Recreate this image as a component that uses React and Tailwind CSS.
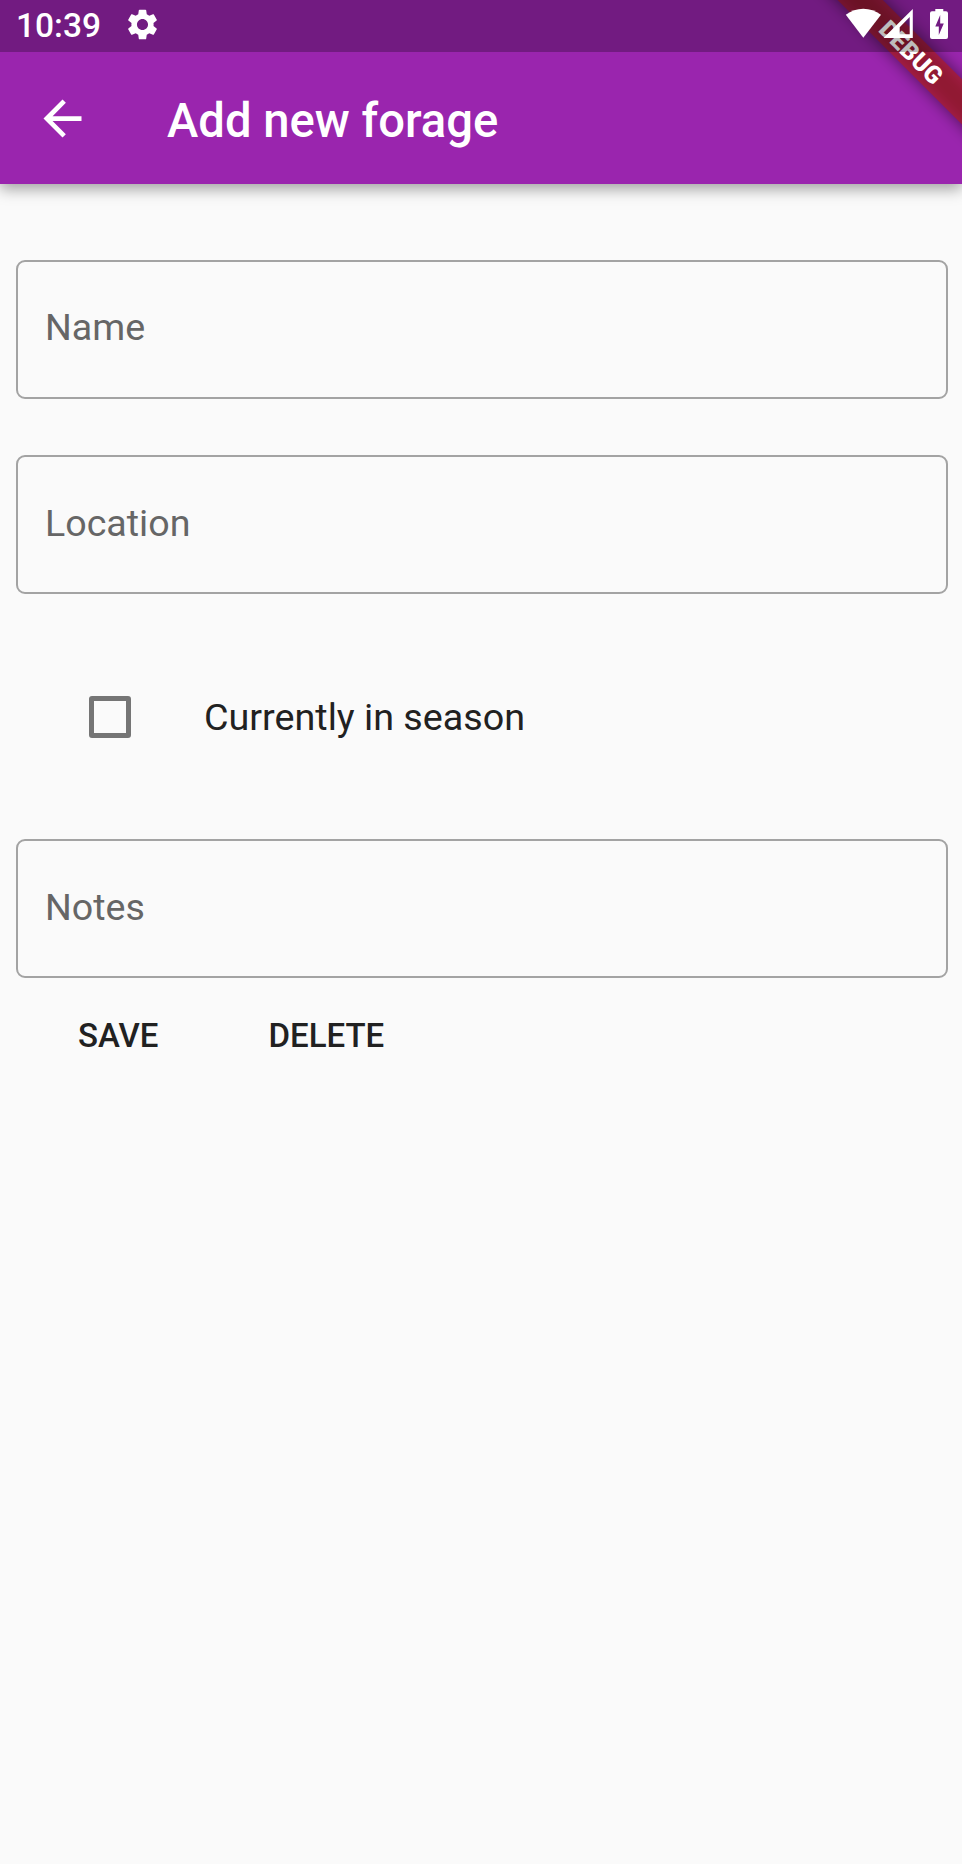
function Gear() {
  return (
    <svg viewBox="0 0 24 24" className="ml-[22.500px] h-[37px] w-[37px] fill-white">
      <path d="M19.14 12.94c.04-.3.06-.61.06-.94 0-.32-.02-.64-.07-.94l2.03-1.58c.18-.14.23-.41.12-.61l-1.92-3.32c-.12-.22-.37-.29-.59-.22l-2.39.96c-.5-.38-1.03-.7-1.62-.94l-.36-2.54c-.04-.24-.24-.41-.48-.41h-3.84c-.24 0-.43.17-.47.41l-.36 2.54c-.59.24-1.13.57-1.62.94l-2.39-.96c-.22-.08-.47 0-.59.22L2.74 8.87c-.12.21-.08.47.12.61l2.03 1.58c-.05.3-.09.63-.09.94s.02.64.07.94l-2.03 1.58c-.18.14-.23.41-.12.61l1.92 3.32c.12.22.37.29.59.22l2.39-.96c.5.38 1.03.7 1.62.94l.36 2.54c.05.24.24.41.48.41h3.84c.24 0 .44-.17.47-.41l.36-2.54c.59-.24 1.13-.56 1.62-.94l2.39.96c.22.08.47 0 .59-.22l1.92-3.32c.12-.22.07-.47-.12-.61l-2.01-1.58zM12 15.6c-1.98 0-3.6-1.62-3.6-3.6s1.62-3.6 3.6-3.6 3.6 1.62 3.6 3.6-1.62 3.6-3.6 3.6z" />
    </svg>
  );
}

function StatusIcons() {
  return (
    <svg viewBox="0 0 160 52" className="ml-auto h-[52px] w-[160px] fill-white">
      <path d="M43.8 14.800C49 11 55 8.800 61.300 8.800s12.500 2.200 17.700 6L61.300 37.800z" />
      <path fillRule="evenodd" d="M110.800 9V38H81.500zM107.700 17L97.700 27.200V34.300H107.700z" />
      <path fillRule="evenodd" d="M133.300 9h8v2.200h2.700a2 2 0 0 1 2 2v23.900a2 2 0 0 1-2 2h-14a2 2 0 0 1-2-2V13.200a2 2 0 0 1 2-2h3.300zM138.200 15l-4.900 11.500h3.500v8.500l5-11.500h-3.600z" />
    </svg>
  );
}

function DebugBanner() {
  return (
    <svg viewBox="0 0 162 162" className="absolute top-0 right-0 h-[162px] w-[162px]">
      <defs>
        <filter id="soft" x="-20%" y="-100%" width="140%" height="300%">
          <feGaussianBlur stdDeviation="8" />
        </filter>
      </defs>
      <g transform="translate(162 0) rotate(45)">
        <rect x="-110" y="56" width="220" height="32" fill="#000" fillOpacity="0.5" filter="url(#soft)" />
        <rect x="-110" y="56" width="220" height="32" fill="#b71c1c" fillOpacity="0.63" />
        <text x="1" y="81.500" textAnchor="middle" className="fill-white font-['Roboto'] text-[24.500px] font-black">DEBUG</text>
      </g>
    </svg>
  );
}

function Field({ label, className }) {
  return (
    <div className={`h-[139px] rounded-[9px] border-2 border-[#a3a3a3] pl-[27px] text-[37.600px] leading-[44px] text-[#666666] ${className}`}>
      {label}
    </div>
  );
}

export default function App() {
  return (
    <div className="h-[1864px] w-[962px] overflow-hidden bg-[#fafafa] font-['Roboto',sans-serif] text-[#212121]">
      <header className="relative h-[184px] overflow-visible bg-[#9a25ae] text-white shadow-[0_5px_14px_rgba(0,0,0,0.36)]">
        <DebugBanner />
        <div className="relative flex h-[52px] items-start bg-black/26">
          <span className="mt-[6px] ml-[16px] w-[85px] text-[33.500px] leading-[40px] font-medium">10:39</span>
          <div className="flex pt-[6px]"><Gear /></div>
          <StatusIcons />
        </div>
        <div className="flex h-[132px] items-center">
          <svg viewBox="0 0 24 24" className="ml-[34px] h-[57px] w-[57px] fill-white">
            <path d="M20 11H7.830l5.590-5.590L12 4l-8 8 8 8 1.410-1.410L7.830 13H20v-2z" />
          </svg>
          <h1 className="mt-[5px] ml-[76px] text-[47.200px] leading-[56px] font-medium">Add new forage</h1>
        </div>
      </header>
      <main className="pt-[76px] pr-[14px] pl-[16px]">
        <Field label="Name" className="pt-[43px]" />
        <Field label="Location" className="mt-[56px] pt-[44px]" />
        <label className="mt-[101px] flex h-[44px] items-center pl-[73px] text-[37.700px]">
          <span className="h-[42px] w-[42px] rounded-[3px] border-[5px] border-[#757575]" />
          <span className="-mt-[1px] ml-[73px] leading-[44px]">Currently in season</span>
        </label>
        <Field label="Notes" className="mt-[100px] pt-[44px]" />
        <div className="mt-[38px] flex pl-[62px] text-[33px] leading-[40px] font-medium">
          <button>SAVE</button>
          <button className="ml-[110px]">DELETE</button>
        </div>
      </main>
    </div>
  );
}
